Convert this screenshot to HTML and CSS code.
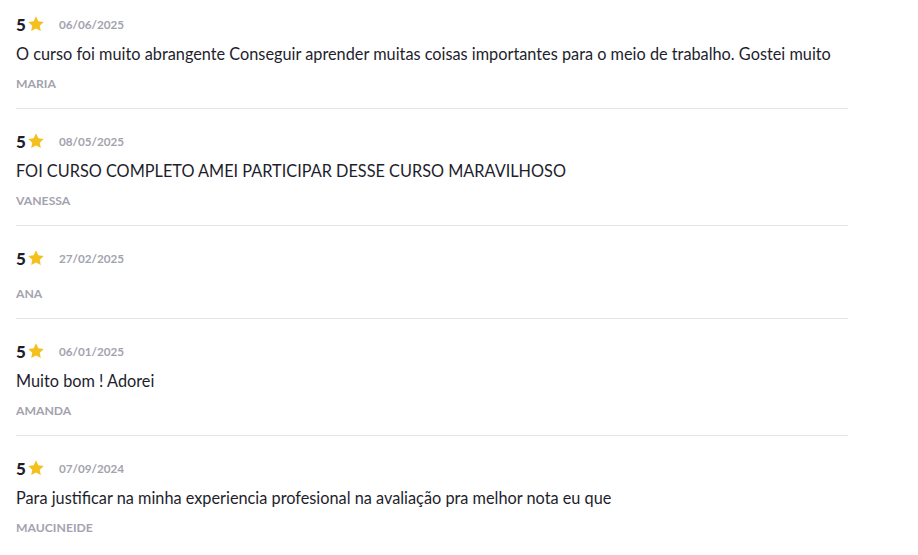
FILE: index.html
```html
<!DOCTYPE html>
<html lang="pt-BR">
<head>
<meta charset="utf-8">
<link rel="stylesheet" href="styles.css">
</head>
<body>
<div class="reviews">
  <div class="review">
    <div class="rating"><span class="score">5</span><svg class="star" viewBox="0 0 24 24"><path d="M12 1.8l3.1 6.6 7.2.9-5.3 5 1.4 7.1L12 17.9l-6.4 3.5 1.4-7.1-5.3-5 7.2-.9z"/></svg><span class="date">06/06/2025</span></div>
    <div class="text">O curso foi muito abrangente Conseguir aprender muitas coisas importantes para o meio de trabalho. Gostei muito</div>
    <div class="name">MARIA</div>
  </div>
  <div class="review">
    <div class="rating"><span class="score">5</span><svg class="star" viewBox="0 0 24 24"><path d="M12 1.8l3.1 6.6 7.2.9-5.3 5 1.4 7.1L12 17.9l-6.4 3.5 1.4-7.1-5.3-5 7.2-.9z"/></svg><span class="date">08/05/2025</span></div>
    <div class="text">FOI CURSO COMPLETO AMEI PARTICIPAR DESSE CURSO MARAVILHOSO</div>
    <div class="name">VANESSA</div>
  </div>
  <div class="review">
    <div class="rating"><span class="score">5</span><svg class="star" viewBox="0 0 24 24"><path d="M12 1.8l3.1 6.6 7.2.9-5.3 5 1.4 7.1L12 17.9l-6.4 3.5 1.4-7.1-5.3-5 7.2-.9z"/></svg><span class="date">27/02/2025</span></div>
    <div class="text"></div>
    <div class="name">ANA</div>
  </div>
  <div class="review">
    <div class="rating"><span class="score">5</span><svg class="star" viewBox="0 0 24 24"><path d="M12 1.8l3.1 6.6 7.2.9-5.3 5 1.4 7.1L12 17.9l-6.4 3.5 1.4-7.1-5.3-5 7.2-.9z"/></svg><span class="date">06/01/2025</span></div>
    <div class="text">Muito bom ! Adorei</div>
    <div class="name">AMANDA</div>
  </div>
  <div class="review">
    <div class="rating"><span class="score">5</span><svg class="star" viewBox="0 0 24 24"><path d="M12 1.8l3.1 6.6 7.2.9-5.3 5 1.4 7.1L12 17.9l-6.4 3.5 1.4-7.1-5.3-5 7.2-.9z"/></svg><span class="date">07/09/2024</span></div>
    <div class="text">Para justificar na minha experiencia profesional na avaliação pra melhor nota eu que</div>
    <div class="name">MAUCINEIDE</div>
  </div>
</div>
</body>
</html>
```

FILE: styles.css
```css
html, body {
  margin: 0;
  padding: 0;
  background: #ffffff;
}

body {
  font-family: "Lato", "Noto Sans", sans-serif;
  color: #1e1e2d;
}

.reviews {
  width: 832px;
  padding: 0 0 0 16px;
}

.review {
  display: flex;
  flex-direction: column;
  padding: 22px 0 16px;
  border-bottom: 1px solid #e4e4ea;
}

.review:first-child {
  padding-top: 14px;
}

.review:last-child {
  border-bottom: none;
}

.rating {
  display: flex;
  align-items: center;
  height: 20px;
  margin-bottom: 8px;
}

.score {
  font-size: 17px;
  font-weight: 900;
  color: #1e1e2d;
}

.star {
  width: 18px;
  height: 18px;
  margin-left: 1px;
  fill: #f4c01e;
}

.date {
  margin-left: 14px;
  font-size: 11.7px;
  font-weight: 700;
  color: #a3a3ae;
}

.text {
  font-size: 16.3px;
  line-height: 24px;
  margin-bottom: 10px;
}

.name {
  font-size: 12.2px;
  line-height: 16px;
  font-weight: 700;
  color: #a3a3ae;
}
```
